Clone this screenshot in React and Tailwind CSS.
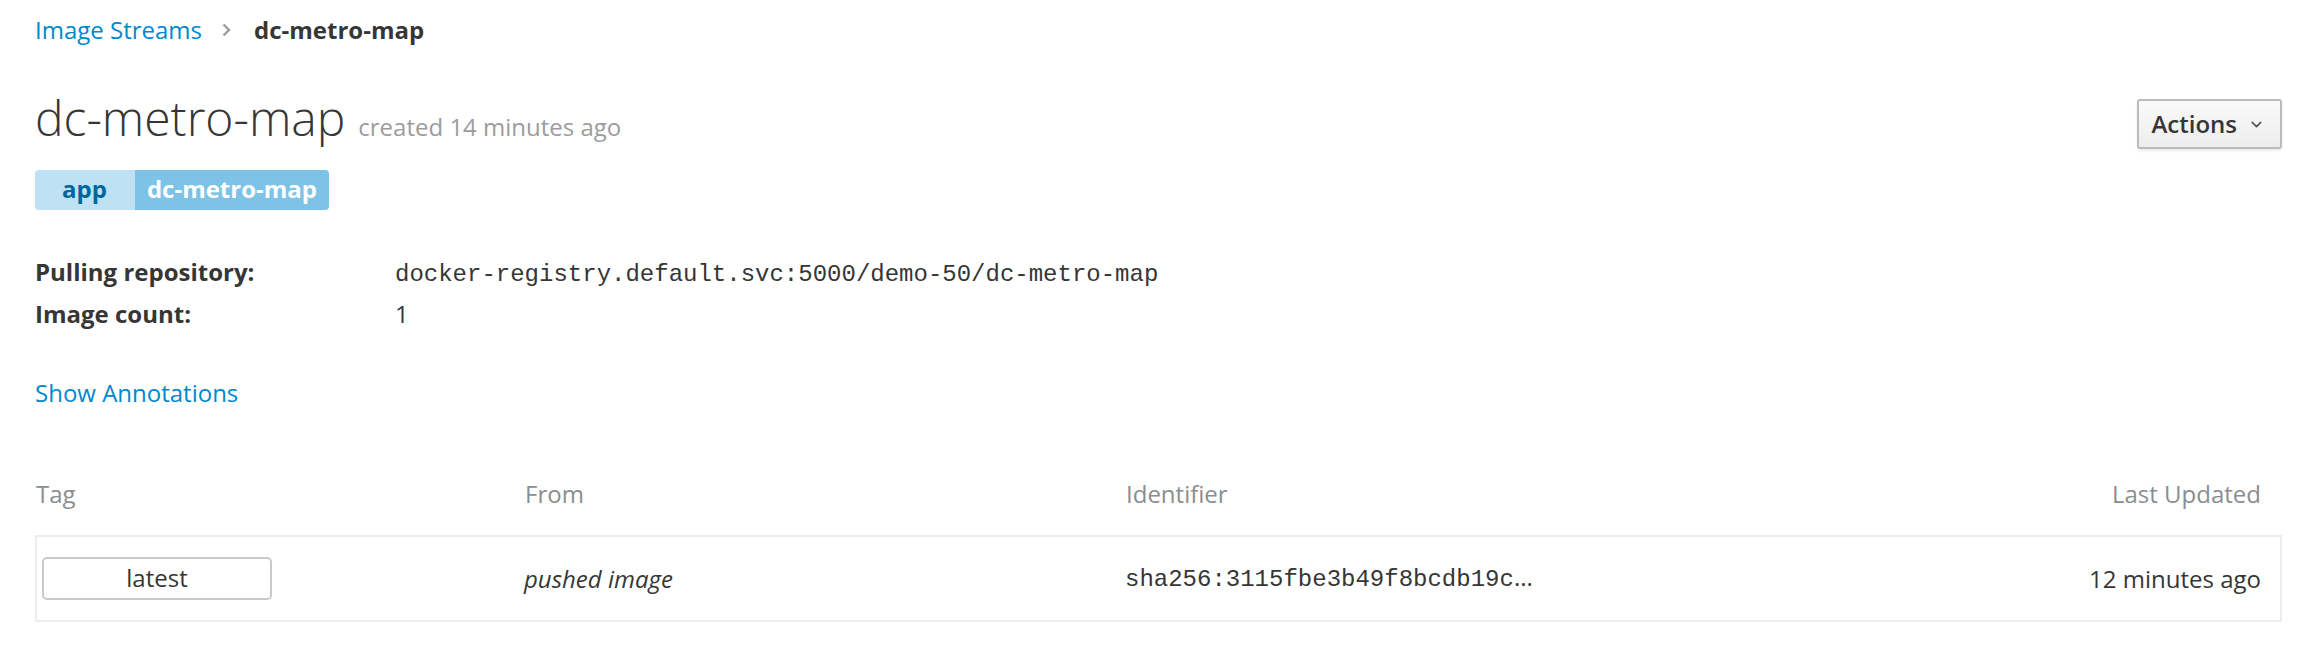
import { ChevronDown } from "lucide-react";

const sans = { fontFamily: '"Open Sans", "Liberation Sans", sans-serif' };
const mono = { fontFamily: '"Liberation Mono", "Courier New", monospace' };

function Breadcrumb() {
    return (
        <div className="flex items-center text-[24px] leading-[36px]">
            <a className="text-[#0088ce]">Image Streams</a>
            {/* chevron separator */}
            <svg className="ml-[20px] mr-[23px]" width="9" height="14" viewBox="0 0 9 14">
                <polyline points="1.5,1.5 7,7 1.5,12.5" fill="none" stroke="#9c9c9c" strokeWidth="2.4" />
            </svg>
            <span className="font-bold text-[#363636]">dc-metro-map</span>
        </div>
    );
}

function Labels() {
    return (
        <div className="mt-[21px] flex h-[40px] w-fit overflow-hidden rounded-[4px] text-[24px] font-bold leading-[34px]">
            <span className="bg-[#bee1f4] pl-[27px] pr-[28px] pt-[2px] text-[#00659c]">app</span>
            <span className="bg-[#7dc3e8] px-[12px] pt-[2px] text-white">dc-metro-map</span>
        </div>
    );
}

function Details() {
    return (
        <div className="mt-[42px] grid grid-cols-[360px_1fr] items-baseline text-[24px] leading-[39px] text-[#363636]">
            <span className="font-bold">Pulling repository:</span>
            <span style={mono}>docker-registry.default.svc:5000/demo-50/dc-metro-map</span>
            <span className="font-bold">Image count:</span>
            <span>1</span>
        </div>
    );
}

function TagTable() {
    return (
        <div>
            <div className="mt-[65px] grid grid-cols-[489px_601px_1fr_auto] pl-[1px] pr-[21px] text-[24px] leading-[36px] text-[#8b8d8f]">
                <span>Tag</span>
                <span>From</span>
                <span>Identifier</span>
                <span className="text-right">Last Updated</span>
            </div>
            <div className="mt-[23px] grid h-[87px] grid-cols-[487px_601px_1fr_auto] items-center border-2 border-[#ededed] pr-[19px] text-[24px] leading-[36px] text-[#363636]">
                <div className="pl-[5px]">
                    <div className="flex h-[43px] w-[230px] items-center justify-center rounded-[5px] border-2 border-[#c9c9c9] bg-white pb-[2px]">
                        latest
                    </div>
                </div>
                <span className="italic">pushed image</span>
                <span style={mono}>
                    sha256:3115fbe3b49f8bcdb19c<span style={sans}>...</span>
                </span>
                <span className="text-right">12 minutes ago</span>
            </div>
        </div>
    );
}

export default function App() {
    return (
        <div className="min-h-[664px] w-full bg-white pl-[35px] pr-[28px] pt-[12px]" style={sans}>
            <Breadcrumb />

            <div className="mt-[42px] flex items-start justify-between">
                <div className="flex items-baseline">
                    <h1 className="text-[48px] font-light leading-[56px] text-[#363636]">dc-metro-map</h1>
                    <span className="ml-[13px] text-[24px] leading-[36px] text-[#9c9c9c]">created 14 minutes ago</span>
                </div>
                <button className="mt-[9px] flex h-[50px] items-center rounded-[3px] border-2 border-[#bbbbbb] bg-gradient-to-b from-[#fafafa] to-[#ededed] pl-[12px] pr-[15px] text-[24px] font-semibold leading-[36px] text-[#363636] shadow-[0_2px_3px_rgba(0,0,0,0.08)]">
                    Actions
                    <ChevronDown className="ml-[11px]" size={17} strokeWidth={2.2} color="#4d5258" />
                </button>
            </div>

            <Labels />
            <Details />

            <div className="mt-[42px] text-[24px] leading-[36px]">
                <a className="text-[#0088ce]">Show Annotations</a>
            </div>

            <TagTable />
        </div>
    );
}
